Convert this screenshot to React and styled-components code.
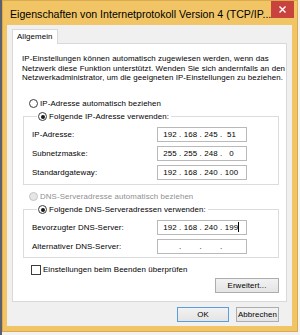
import React from "react";
import styled, { createGlobalStyle } from "styled-components";

const Global = createGlobalStyle`
  html, body { margin: 0; padding: 0; }
  body {
    width: 300px;
    height: 335px;
    overflow: hidden;
    background: linear-gradient(to right, #5b616c 0, #5b616c 2px, #f3f3f3 2px);
    font-family: "Liberation Sans", Arial, sans-serif;
  }
`;

const Window = styled.div`
  box-sizing: border-box;
  width: 296px;
  height: 332px;
  margin-left: 2px;
  background: #f1c566;
  border: 1px solid #d9ab4c;
  display: flex;
  flex-direction: column;
`;

const TitleBar = styled.div`
  height: 24px;
  flex: none;
  display: flex;
  align-items: flex-start;
`;

const Title = styled.div`
  flex: 1;
  padding-left: 7px;
  line-height: 26px;
  font-size: 10.6px;
  color: #000;
  white-space: nowrap;
  overflow: hidden;
`;

const CloseButton = styled.div`
  width: 23px;
  height: 17px;
  margin-right: 3px;
  background: #c8433d;
  display: flex;
  align-items: center;
  justify-content: center;
`;

const Body = styled.div`
  flex: 1;
  margin: 0 5px 5px 4px;
  background: #f0f0f0;
  padding: 0 5px;
  display: flex;
  flex-direction: column;
  font-size: 7.9px;
  letter-spacing: 0.1px;
  color: #000;
`;

const Tab = styled.div`
  align-self: flex-start;
  box-sizing: border-box;
  height: 15px;
  margin-top: 4px;
  margin-bottom: -1px;
  padding: 0 4px 0 4px;
  border: 1px solid #d9d9d9;
  border-bottom: none;
  background: #fff;
  position: relative;
  z-index: 1;
  line-height: 14px;
`;

const Panel = styled.div`
  box-sizing: border-box;
  height: 259px;
  flex: none;
  border: 1px solid #d9d9d9;
  background: #fff;
  display: flex;
  flex-direction: column;
`;

const Intro = styled.p`
  margin: 10px 0 0 9px;
  line-height: 9.5px;
  white-space: nowrap;
`;

const OptionRow = styled.label`
  display: flex;
  align-items: center;
  height: 10px;
  margin: ${(p) => p.$mt || 0}px 0 0 ${(p) => p.$ml || 0}px;
  color: ${(p) => (p.$disabled ? "#8f8f8f" : "#000")};
  white-space: nowrap;
`;

const RadioMark = styled.span`
  box-sizing: border-box;
  width: 9px;
  height: 9px;
  border-radius: 50%;
  border: 1px solid ${(p) => (p.$disabled ? "#c4c4c4" : "#3c3c3c")};
  background: ${(p) => (p.$disabled ? "#e6e6e6" : "#fff")};
  margin-right: 2px;
  display: flex;
  align-items: center;
  justify-content: center;
  flex: none;
  &::after {
    content: "";
    display: ${(p) => (p.$checked ? "block" : "none")};
    width: 4px;
    height: 4px;
    border-radius: 50%;
    background: #1a1a1a;
  }
`;

const CheckMark = styled.span`
  box-sizing: border-box;
  width: 10px;
  height: 10px;
  border: 1px solid #3c3c3c;
  background: #fff;
  margin-right: 2px;
  flex: none;
`;

const Group = styled.fieldset`
  margin: ${(p) => p.$mt}px 7px 0 10px;
  padding: 5px 0 ${(p) => p.$pb}px 8px;
  border: 1px solid #dcdcdc;
  min-width: 0;
`;

const Legend = styled.legend`
  padding: 0 2px 0 1px;
  margin-left: 5px;
`;

const FieldGrid = styled.div`
  display: grid;
  grid-template-columns: 125px 90px;
  row-gap: 4px;
  align-items: center;
`;

const FieldLabel = styled.span`
  white-space: nowrap;
`;

const IpBox = styled.div`
  box-sizing: border-box;
  width: 90px;
  height: 15px;
  border: 1px solid #b9b9b9;
  background: #fff;
  display: flex;
  align-items: center;
  padding-left: 4px;
`;

const Octet = styled.span`
  width: 16px;
  text-align: center;
`;

const OctetText = styled.span`
  position: relative;
`;

const Dot = styled.span`
  width: 4.5px;
  text-align: center;
`;

const Caret = styled.span`
  position: absolute;
  top: -1px;
  left: 100%;
  width: 1px;
  height: 10px;
  background: #000;
`;

const ButtonRow = styled.div`
  display: flex;
  justify-content: flex-end;
  gap: ${(p) => p.$gap || 0}px;
  margin: ${(p) => p.$mt}px ${(p) => p.$mr}px 0 0;
`;

const Button = styled.div`
  box-sizing: border-box;
  width: ${(p) => p.$w}px;
  height: 15px;
  border: 1px solid ${(p) => (p.$default ? "#5b9ee0" : "#adadad")};
  background: linear-gradient(#f2f2f2, #e4e4e4);
  display: flex;
  align-items: center;
  justify-content: center;
  white-space: nowrap;
`;

function Radio({ checked, disabled, children, mt, ml }) {
  return (
    <OptionRow $mt={mt} $ml={ml} $disabled={disabled}>
      <RadioMark $checked={checked} $disabled={disabled} />
      {children}
    </OptionRow>
  );
}

function Ip({ parts, caret }) {
  return (
    <IpBox>
      {parts.map((p, i) => (
        <React.Fragment key={i}>
          <Octet>
            <OctetText>
              {p}
              {caret && i === 3 && <Caret />}
            </OctetText>
          </Octet>
          {i < 3 && <Dot>.</Dot>}
        </React.Fragment>
      ))}
    </IpBox>
  );
}

export default function App() {
  return (
    <>
      <Global />
      <Window>
        <TitleBar>
          <Title>Eigenschaften von Internetprotokoll Version 4 (TCP/IP...</Title>
          <CloseButton>
            <svg width="7" height="7" viewBox="0 0 7 7">
              <path d="M0.5 0.5 L6.5 6.5 M6.5 0.5 L0.5 6.5" stroke="#fff" strokeWidth="1.4" />
            </svg>
          </CloseButton>
        </TitleBar>
        <Body>
          <Tab>Allgemein</Tab>
          <Panel>
            <Intro>
              IP-Einstellungen können automatisch zugewiesen werden, wenn das
              <br />
              Netzwerk diese Funktion unterstützt. Wenden Sie sich andernfalls an den
              <br />
              Netzwerkadministrator, um die geeigneten IP-Einstellungen zu beziehen.
            </Intro>
            <Radio mt={16} ml={16}>IP-Adresse automatisch beziehen</Radio>
            <Group $mt={3} $pb={4}>
              <Legend>
                <Radio checked>Folgende IP-Adresse verwenden:</Radio>
              </Legend>
              <FieldGrid>
                <FieldLabel>IP-Adresse:</FieldLabel>
                <Ip parts={["192", "168", "245", "51"]} />
                <FieldLabel>Subnetzmaske:</FieldLabel>
                <Ip parts={["255", "255", "248", "0"]} />
                <FieldLabel>Standardgateway:</FieldLabel>
                <Ip parts={["192", "168", "240", "100"]} />
              </FieldGrid>
            </Group>
            <Radio mt={7} ml={16} disabled>
              DNS-Serveradresse automatisch beziehen
            </Radio>
            <Group $mt={3} $pb={3}>
              <Legend>
                <Radio checked>Folgende DNS-Serveradressen verwenden:</Radio>
              </Legend>
              <FieldGrid>
                <FieldLabel>Bevorzugter DNS-Server:</FieldLabel>
                <Ip parts={["192", "168", "240", "199"]} caret />
                <FieldLabel>Alternativer DNS-Server:</FieldLabel>
                <Ip parts={["", "", "", ""]} />
              </FieldGrid>
            </Group>
            <OptionRow $mt={7} $ml={18}>
              <CheckMark />
              Einstellungen beim Beenden überprüfen
            </OptionRow>
            <ButtonRow $mt={3} $mr={7}>
              <Button $w={64}>Erweitert...</Button>
            </ButtonRow>
          </Panel>
          <ButtonRow $mt={5} $mr={8} $gap={7}>
            <Button $w={52} $default>OK</Button>
            <Button $w={43}>Abbrechen</Button>
          </ButtonRow>
        </Body>
      </Window>
    </>
  );
}
